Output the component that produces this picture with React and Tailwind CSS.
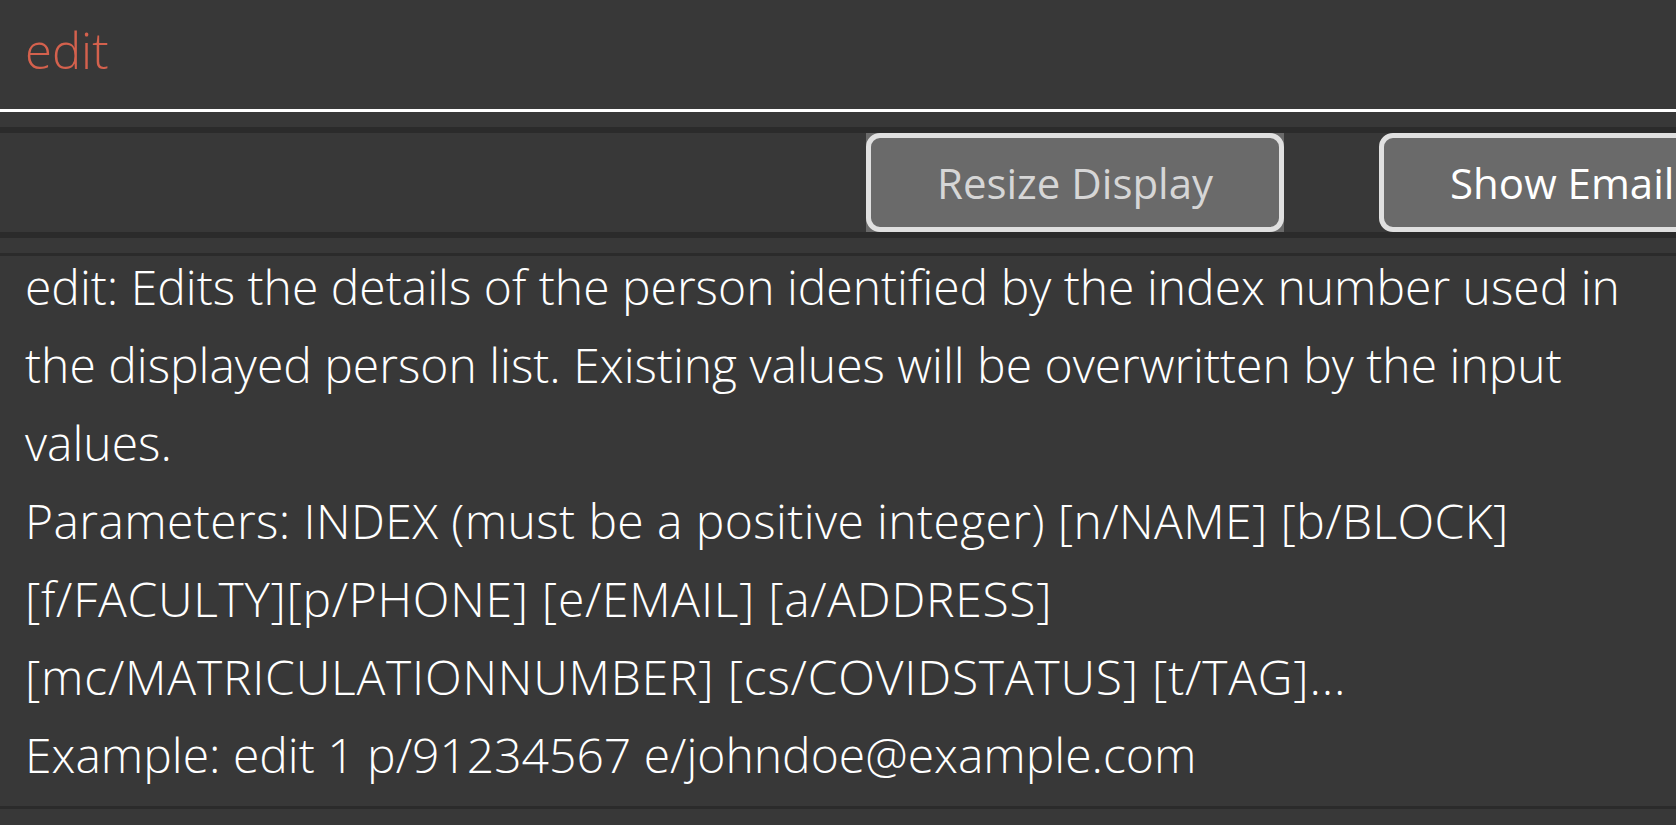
const LINES = [
  { text: "edit: Edits the details of the person identified by the index number used in", track: "" },
  { text: "the displayed person list. Existing values will be overwritten by the input", track: "" },
  { text: "values.", track: "" },
  { text: "Parameters: INDEX (must be a positive integer) [n/NAME] [b/BLOCK]", track: "tracking-[0.4px]" },
  { text: "[f/FACULTY][p/PHONE] [e/EMAIL] [a/ADDRESS]", track: "tracking-[0.7px]" },
  { text: "[mc/MATRICULATIONNUMBER] [cs/COVIDSTATUS] [t/TAG]...", track: "tracking-[0.8px]" },
  { text: "Example: edit 1 p/91234567 e/johndoe@example.com", track: "" },
];

export default function App() {
  return (
    <div className="w-[1676px] h-[825px] bg-[#383838] overflow-hidden font-['Open_Sans',sans-serif]">
      {/* command box */}
      <div className="h-[109px] px-[25px] pt-[20px]">
        <span className="text-[49px] font-light leading-[60px] text-[#d4614d]">edit</span>
      </div>
      <div className="h-[3px] bg-white" />
      <div className="h-[15px]" />
      <div className="h-[6px] bg-[#2b2b2b]" />

      {/* buttons */}
      <div className="h-[99px] flex gap-[95px] pl-[866px] overflow-hidden">
        <div className="shrink-0 bg-[#6a6a6a]">
          <button className="h-full px-[66px] rounded-[14px] border-[5px] border-[#e0e0e0] text-[42px] text-[#d6d6d6] whitespace-nowrap">
            Resize Display
          </button>
        </div>
        <button className="shrink-0 h-full px-[66px] rounded-[14px] border-[5px] border-[#e0e0e0] bg-[#6a6a6a] text-[42px] text-white whitespace-nowrap">
          Show Email
        </button>
      </div>

      <div className="h-[6px] bg-[#2b2b2b]" />
      <div className="h-[15px]" />
      <div className="h-[3px] bg-[#2b2b2b]" />

      {/* result display */}
      <div className="h-[558px] px-[25px]">
        <div className="-mt-[8px] text-white font-light text-[48px] leading-[78px]">
          {LINES.map(line => (
            <div key={line.text} className={`whitespace-nowrap ${line.track}`}>{line.text}</div>
          ))}
        </div>
      </div>
      <div className="h-[3px] bg-[#2b2b2b]" />
    </div>
  );
}
